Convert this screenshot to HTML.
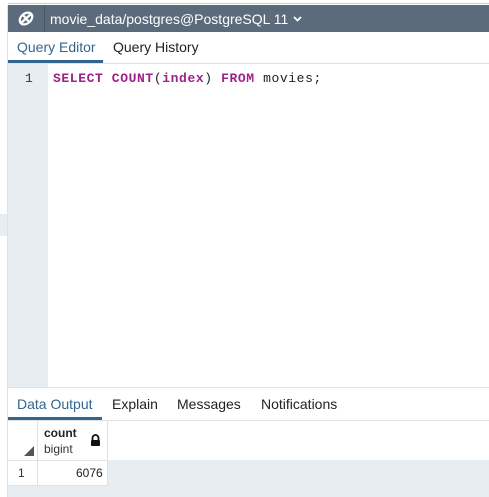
<!DOCTYPE html>
<html><head><style>
body{margin:0;width:489px;height:497px;overflow:hidden;background:#fff;font-family:"Liberation Sans",sans-serif;position:relative}
.a{position:absolute}
</style></head><body>
<div class="a" style="left:0;top:0;width:489px;height:5px;background:#fff"></div>
<div class="a" style="left:8px;top:0;width:481px;height:3px;border-bottom:1px solid #ccc"></div>
<div class="a" style="left:0;top:214px;width:7px;height:22px;background:#e8edf2"></div>
<div class="a" style="left:7px;top:5px;width:1px;height:492px;background:#dde2e8"></div>
<div class="a" style="left:8px;top:5px;width:481px;height:27px;background:#5b6b7b"></div>
<div class="a" style="left:44px;top:5px;width:1px;height:27px;background:#485563"></div>
<svg class="a" style="left:17px;top:10px" width="18" height="17" viewBox="0 0 18 17"><g fill="none" stroke="#fff" stroke-width="2.2"><ellipse cx="9" cy="8.5" rx="7" ry="5" transform="rotate(-40 9 8.5)"/><path d="M4 13 L14 4 M6 5 L12 12"/></g></svg>
<div class="a" style="left:50px;top:11px;color:#fff;font-size:14px">movie_data/postgres@PostgreSQL 11</div>
<svg class="a" style="left:293px;top:16px" width="9" height="6"><path d="M1 1 L4.5 4.5 L8 1" fill="none" stroke="#fff" stroke-width="1.8"/></svg>
<div class="a" style="left:17px;top:39px;color:#326690;font-size:14px">Query Editor</div>
<div class="a" style="left:113px;top:39px;color:#222;font-size:14px">Query History</div>
<div class="a" style="left:8px;top:60px;width:95px;height:3px;background:#326690"></div>
<div class="a" style="left:8px;top:63px;width:481px;height:1px;background:#dde2e8"></div>
<div class="a" style="left:8px;top:64px;width:40px;height:324px;background:#e8edf2"></div>
<div class="a" style="left:25px;top:71px;font-family:'Liberation Mono',monospace;font-size:13px;color:#333">1</div>
<div class="a" style="left:53px;top:71px;font-family:'Liberation Mono',monospace;font-size:13px;letter-spacing:0.6px;color:#222;white-space:pre"><b style="color:#a0208a">SELECT COUNT</b>(<b style="color:#a0208a">index</b>) <b style="color:#a0208a">FROM</b> movies;</div>
<div class="a" style="left:8px;top:387px;width:481px;height:1px;background:#dde2e8"></div>
<div class="a" style="left:17px;top:396px;color:#326690;font-size:14px">Data Output</div>
<div class="a" style="left:112px;top:396px;color:#222;font-size:14px">Explain</div>
<div class="a" style="left:177px;top:396px;color:#222;font-size:14px">Messages</div>
<div class="a" style="left:261px;top:396px;color:#222;font-size:14px">Notifications</div>
<div class="a" style="left:8px;top:417px;width:94px;height:3px;background:#326690"></div>
<div class="a" style="left:8px;top:420px;width:481px;height:1px;background:#dde2e8"></div>
<div class="a" style="left:8px;top:460px;width:481px;height:37px;background:#e8edf2"></div>
<div class="a" style="left:8px;top:421px;width:100px;height:64px;background:#fff"></div>
<div class="a" style="left:37px;top:421px;width:1px;height:64px;background:#dde2e8"></div>
<div class="a" style="left:107px;top:421px;width:1px;height:64px;background:#dde2e8"></div>
<div class="a" style="left:8px;top:460px;width:100px;height:1px;background:#dde2e8"></div>
<div class="a" style="left:8px;top:485px;width:100px;height:1px;background:#dde2e8"></div>
<svg class="a" style="left:24px;top:446px" width="10" height="10"><path d="M10 0 L10 10 L0 10Z" fill="#555"/></svg>
<div class="a" style="left:44px;top:426px;font-size:12px;font-weight:bold;color:#222">count</div>
<div class="a" style="left:44px;top:442px;font-size:12px;color:#333">bigint</div>
<svg class="a" style="left:90px;top:434px" width="11" height="12" viewBox="0 0 11 12"><path d="M2.5 6V4a3 3 0 0 1 6 0v2" fill="none" stroke="#111" stroke-width="1.8"/><rect x="1" y="6" width="9" height="6" rx="1" fill="#111"/></svg>
<div class="a" style="left:18px;top:466px;font-size:12px;color:#333">1</div>
<div class="a" style="left:76px;top:466px;font-size:12px;color:#222">6076</div>
</body></html>
